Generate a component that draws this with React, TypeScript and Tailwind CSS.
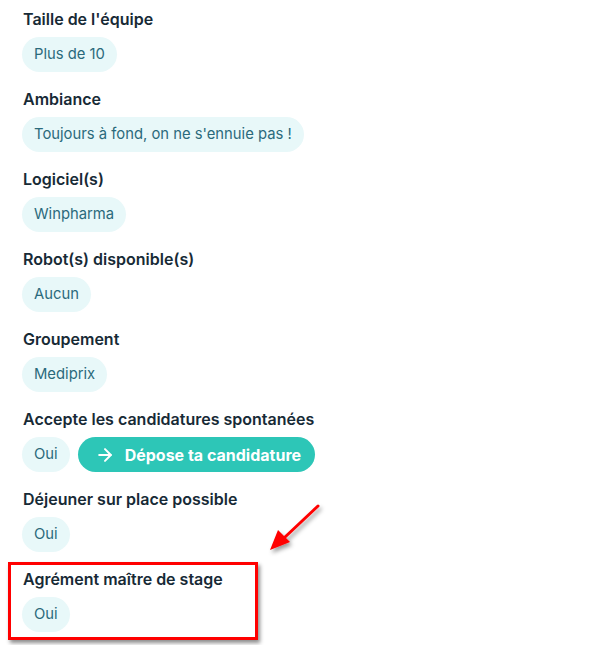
import { ArrowRight } from 'lucide-react';

interface Field {
  label: string;
  value: string;
  apply?: boolean;
}

const fields: Field[] = [
  { label: "Taille de l'équipe", value: 'Plus de 10' },
  { label: 'Ambiance', value: "Toujours à fond, on ne s'ennuie pas !" },
  { label: 'Logiciel(s)', value: 'Winpharma' },
  { label: 'Robot(s) disponible(s)', value: 'Aucun' },
  { label: 'Groupement', value: 'Mediprix' },
  { label: 'Accepte les candidatures spontanées', value: 'Oui', apply: true },
  { label: 'Déjeuner sur place possible', value: 'Oui' },
  { label: 'Agrément maître de stage', value: 'Oui' },
];

export default function App() {
  return (
    <div
      className="relative w-[608px] h-[645px] bg-white overflow-hidden"
      style={{ fontFamily: 'Inter, "Noto Sans", sans-serif' }}
    >
      <div className="flex flex-col px-[22px] pt-[9px]">
        {fields.map((f) => (
          <div key={f.label} className="flex flex-col gap-2 pb-[17px]">
            <h3 className="pl-px text-[16px] leading-5 font-semibold text-[#172a36]">{f.label}</h3>
            <div className="flex items-center gap-2">
              <span className="h-[35px] px-3 flex items-center rounded-full bg-[#e8f8f9] text-[14.8px] text-[#2b6a7c]">
                {f.value}
              </span>
              {f.apply && (
                <button className="h-[35px] pl-[17px] pr-[14px] flex items-center gap-[10px] rounded-full bg-[#2dc6b7] text-white text-[16px] font-bold">
                  <ArrowRight className="w-5 h-5" strokeWidth={2.4} />
                  Dépose ta candidature
                </button>
              )}
            </div>
          </div>
        ))}
      </div>

      {/* annotation: red frame */}
      <div className="absolute left-[8px] top-[562px] w-[250px] h-[78px] border-[3px] border-[#ff0000] shadow-[2px_3px_4px_rgba(0,0,0,0.45)]" />

      {/* annotation: arrow */}
      <svg className="absolute left-[262px] top-[500px]" width="64" height="58" viewBox="0 0 64 58">
        <defs>
          <filter id="sh" x="-30%" y="-30%" width="160%" height="160%">
            <feDropShadow dx="2" dy="3" stdDeviation="2" floodColor="#000" floodOpacity="0.4" />
          </filter>
        </defs>
        <g filter="url(#sh)">
          <line x1="56" y1="6" x2="22" y2="38" stroke="#ff0000" strokeWidth="3" strokeLinecap="round" />
          <polygon points="8,50 16,30 28,42" fill="#ff0000" />
        </g>
      </svg>
    </div>
  );
}
